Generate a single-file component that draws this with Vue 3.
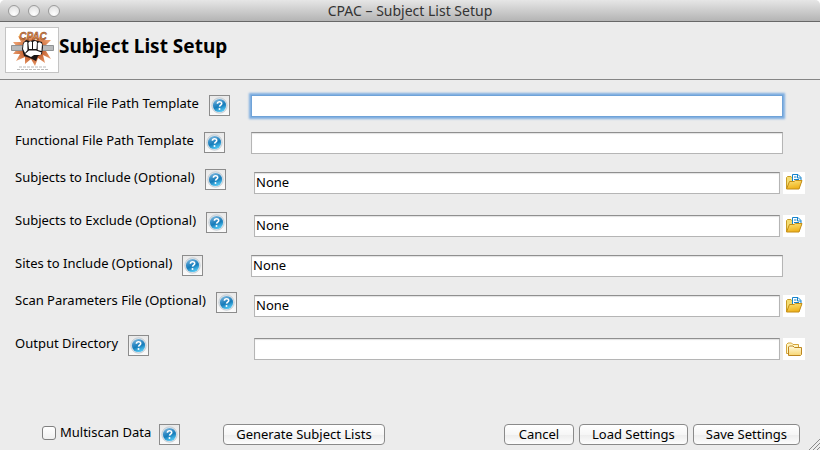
<script setup>
import { reactive, ref } from 'vue'

const fields = reactive([
  { id: 'anat', label: 'Anatomical File Path Template', value: '', focused: true },
  { id: 'func', label: 'Functional File Path Template', value: '' },
  { id: 'include', label: 'Subjects to Include (Optional)', value: 'None', picker: 'file' },
  { id: 'exclude', label: 'Subjects to Exclude (Optional)', value: 'None', picker: 'file' },
  { id: 'sites', label: 'Sites to Include (Optional)', value: 'None' },
  { id: 'scan', label: 'Scan Parameters File (Optional)', value: 'None', picker: 'file' },
  { id: 'output', label: 'Output Directory', value: '', picker: 'folder' },
])
const multiscan = ref(false)
</script>

<template>
  <div class="window">
    <svg class="defs" width="0" height="0" aria-hidden="true">
      <defs>
        <linearGradient id="ball" x1="0" y1="0" x2="0.4" y2="1">
          <stop offset="0" stop-color="#9ccbe8" />
          <stop offset="0.4" stop-color="#3a90c8" />
          <stop offset="0.65" stop-color="#167cba" />
          <stop offset="1" stop-color="#4cc0ee" />
        </linearGradient>
        <linearGradient id="gold" x1="0" y1="0" x2="0.3" y2="1">
          <stop offset="0" stop-color="#fde47a" />
          <stop offset="1" stop-color="#eeb21c" />
        </linearGradient>
        <linearGradient id="cream" x1="0" y1="0" x2="0" y2="1">
          <stop offset="0" stop-color="#fffbe0" />
          <stop offset="1" stop-color="#f7d673" />
        </linearGradient>
        <radialGradient id="burst">
          <stop offset="0.3" stop-color="#b9501f" />
          <stop offset="1" stop-color="#e99c6c" />
        </radialGradient>
        <symbol id="help" viewBox="0 0 17 17">
          <circle cx="8.5" cy="8.5" r="7.7" fill="#e2e7eb" stroke="#b9c4cd" stroke-width="0.8" />
          <circle cx="8.5" cy="8.5" r="6.6" fill="url(#ball)" />
          <path d="M6.4 6.8C6.5 4.1 10.8 4.1 10.7 6.6C10.6 8 8.7 8.2 8.5 9.7" fill="none" stroke="#fff" stroke-width="1.6" />
          <circle cx="8.5" cy="11.9" r="1" fill="#fff" />
        </symbol>
        <symbol id="file" viewBox="0 1 18 18">
          <path d="M1.5 15.500V4.500L2.500 3.500H6L7.500 5H14V15.500Z" fill="#f3dc72" stroke="#c99c25" />
          <path d="M7.500 9.500V1.500H13L16 4.500V9.500Z" fill="#fff" stroke="#1684cc" />
          <path d="M12.500 1.500V5H16M9 4H11.500M9 6.500H14" fill="none" stroke="#1684cc" />
          <path d="M1.500 16L4.500 8.500H9L10.500 7.500H17L14 16Z" fill="url(#gold)" stroke="#c58e16" />
        </symbol>
        <symbol id="folder" viewBox="0 0 18 18">
          <path d="M1.500 13.500V4.500L3 3H6.500L8 4.500H13.500V13.500Z" fill="#fff6c4" stroke="#d5a53b" />
          <path d="M3.500 15.500V7L4.500 6H8L9.500 7.500H16.500V14.500L15.500 15.500Z" fill="url(#cream)" stroke="#bd8620" />
        </symbol>
      </defs>
    </svg>

    <header class="titlebar">
      <div class="lights"><i></i><i></i><i></i></div>
      <span>CPAC – Subject List Setup</span>
    </header>

    <section class="banner">
      <svg class="logo" viewBox="0 0 54 46" role="img" aria-label="CPAC logo">
        <rect x="0.5" y="0.5" width="53" height="45" fill="#fff" stroke="#c4c4c4" />
        <path d="M27 9L31 13L36 9L38 13L46 13L41 18L48 21L41 24L46 32L38 28L40 36L33 31L30 39L26 32L20 37L20 30L11 34L15 27L8 27L13 21L8 15L16 15L13 9L21 12Z" fill="url(#burst)" />
        <path d="M6.500 18.500H20V23.500H6.500ZM37 18.500H48.500V23.500H37Z" fill="#b8babc" stroke="#909395" />
        <text x="28" y="13" class="logo-name">CPAC</text>
        <path d="M18 16L21 13L25 14L29 13L33 14L37 15L38 20L37 27L33 29L31 34L25 31L19 29L17 22Z" fill="#171313" />
        <path d="M18.500 17Q19.500 14 22.300 15L22.500 23L20 26L18 22ZM23.300 16Q25 13 27 15L27 22H24ZM28 15Q30 13 32 15L31.500 22H28ZM32.700 16Q35 14 37 17L36.500 24L32.700 23ZM20 27L24 23.500L31 23.500L36.500 25.500L35.500 28L29 28L26 30Z" fill="#fff" />
        <path d="M14 40H42M12 42.500H44" stroke="#999" stroke-width="1" stroke-dasharray="3 1" opacity="0.65" />
      </svg>
      <h1>Subject List Setup</h1>
    </section>

    <form class="form" @submit.prevent>
      <div v-for="f in fields" :key="f.id" class="row">
        <div class="caption">
          <label :for="f.id">{{ f.label }}</label>
          <button type="button" class="help" :aria-label="'Help: ' + f.label">
            <svg><use href="#help" /></svg>
          </button>
        </div>
        <div class="field" :class="{ picking: f.picker }">
          <input :id="f.id" v-model="f.value" type="text" :class="{ focused: f.focused }" />
          <button v-if="f.picker" type="button" class="pick" :aria-label="'Browse: ' + f.label">
            <svg><use :href="'#' + f.picker" /></svg>
          </button>
        </div>
      </div>
    </form>

    <footer class="actions">
      <input id="multiscan" v-model="multiscan" type="checkbox" />
      <label for="multiscan">Multiscan Data</label>
      <button type="button" class="help" aria-label="Help: Multiscan Data">
        <svg><use href="#help" /></svg>
      </button>
      <button type="button" class="push generate">Generate Subject Lists</button>
      <div class="right">
        <button type="button" class="push">Cancel</button>
        <button type="button" class="push">Load Settings</button>
        <button type="button" class="push">Save Settings</button>
      </div>
      <svg class="grip" viewBox="0 0 12 12" aria-hidden="true">
        <path d="M1 12L12 1M5 12L12 5M9 12L12 9" stroke="#8a8a8a" />
      </svg>
    </footer>
  </div>
</template>

<style>
body {
  margin: 0;
  background: #fff;
}
</style>

<style scoped>
.window {
  position: relative;
  display: flex;
  flex-direction: column;
  min-height: 100vh;
  box-sizing: border-box;
  overflow: hidden;
  border-radius: 5px 5px 0 0;
  background: #ececec;
  color: #000;
  font: 13px/16px "Noto Sans", "Open Sans", sans-serif;
}
.defs {
  position: absolute;
}
button,
input {
  box-sizing: border-box;
  margin: 0;
  font: inherit;
  color: inherit;
}
.titlebar {
  display: grid;
  grid-template-columns: 1fr auto 1fr;
  align-items: center;
  height: 22px;
  box-sizing: border-box;
  border-bottom: 1px solid #686868;
  background: linear-gradient(#e6e6e6, #b4b4b4);
  color: #333;
  font-size: 14px;
}
.lights {
  display: flex;
  gap: 8px;
  padding-left: 8px;
}
.lights i {
  width: 12px;
  height: 12px;
  box-sizing: border-box;
  border: 1px solid #9a9a9a;
  border-radius: 50%;
  background: radial-gradient(circle at 50% 80%, #fff, #dcdcdc);
}
.banner {
  display: flex;
  align-items: flex-start;
  height: 58px;
  box-sizing: border-box;
  padding: 5px 5px 0;
  border-bottom: 1px solid #858585;
}
.logo {
  width: 54px;
  height: 46px;
}
.logo-name {
  font: italic bold 10px "Liberation Sans", sans-serif;
  text-anchor: middle;
  fill: #e58a45;
  stroke: #71381c;
  stroke-width: 0.4px;
}
h1 {
  margin: 7px 0 0;
  font-size: 19px;
  line-height: 24px;
  font-weight: 700;
}
.form {
  display: flex;
  flex-direction: column;
  gap: 15px;
  padding: 15px 15px 0;
}
.row {
  display: grid;
  grid-template-columns: 236px 1fr;
  align-items: start;
}
.caption {
  display: flex;
  align-items: flex-start;
  gap: 10px;
  white-space: nowrap;
}
.help {
  display: grid;
  place-items: center;
  width: 21px;
  height: 21px;
  padding: 0;
  border: 1px solid #8c8c8c;
  background: linear-gradient(#e9e9e9, #fafafa);
}
.help svg {
  width: 17px;
  height: 17px;
}
.field {
  display: flex;
  gap: 3px;
  padding-right: 22px;
}
.picking {
  padding: 3px 0 3px 3px;
}
.field input {
  flex: 1;
  min-width: 0;
  height: 22px;
  padding: 0 1px 2px;
  border: 1px solid #b5b5b5;
  border-top-color: #8f8f8f;
  border-radius: 0;
  outline: none;
  background: #fff;
  box-shadow: inset 0 1px 1px #e2e2e2;
}
.field .focused,
.field input:focus {
  border-color: #6fa3d8;
  box-shadow: 0 0 2px 2px #7dade0;
}
.pick {
  display: grid;
  place-items: center;
  width: 22px;
  height: 22px;
  padding: 0;
  border: 0;
  background: #fff;
}
.pick svg {
  width: 18px;
  height: 18px;
}
.actions {
  display: flex;
  align-items: flex-start;
  margin-top: auto;
  padding: 0 20px 5px 42px;
}
.actions input {
  appearance: none;
  width: 14px;
  height: 14px;
  margin: 2px 4px 0 0;
  border: 1px solid #808080;
  border-radius: 3px;
  background: linear-gradient(#fff, #f0f0f0);
}
.actions input:checked {
  background: #4a86c8;
}
.actions label {
  margin-right: 8px;
}
.push {
  height: 21px;
  min-width: 70px;
  padding: 0 12px;
  border: 1px solid #8a8a8a;
  border-radius: 4px;
  background: linear-gradient(#fff, #f6f6f6 50%, #ececec 51%, #fdfdfd);
  line-height: 19px;
  white-space: nowrap;
}
.generate {
  margin-left: 43px;
}
.right {
  display: flex;
  gap: 5px;
  margin-left: auto;
}
.grip {
  position: absolute;
  right: 0;
  bottom: 0;
  width: 12px;
  height: 12px;
}
</style>
